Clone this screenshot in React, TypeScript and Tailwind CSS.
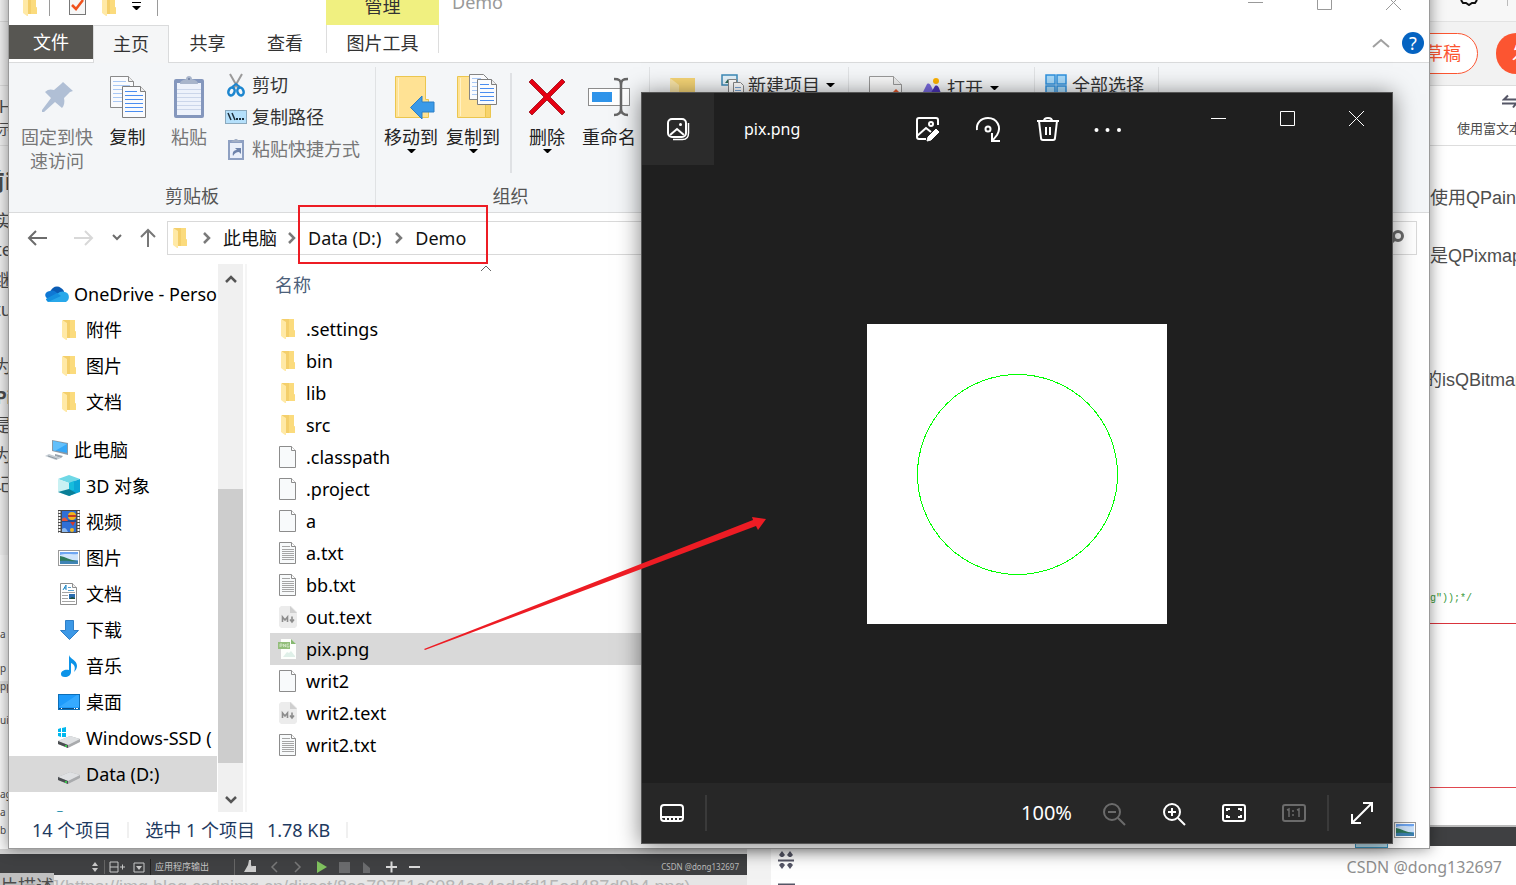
import type { ReactNode } from 'react';

const PLACES: { label: string; icon: ReactNode; level: number; gap?: boolean; active?: boolean }[] = [
  { label: 'OneDrive - Perso', icon: <CloudIcon />, level: 0 },
  { label: '附件', icon: <FolderIcon />, level: 1 },
  { label: '图片', icon: <FolderIcon />, level: 1 },
  { label: '文档', icon: <FolderIcon />, level: 1 },
  { label: '此电脑', icon: <ComputerIcon />, level: 0, gap: true },
  { label: '3D 对象', icon: <CubeIcon />, level: 1 },
  { label: '视频', icon: <VideoIcon />, level: 1 },
  { label: '图片', icon: <PictureIcon />, level: 1 },
  { label: '文档', icon: <DocumentIcon />, level: 1 },
  { label: '下载', icon: <DownloadIcon />, level: 1 },
  { label: '音乐', icon: <MusicIcon />, level: 1 },
  { label: '桌面', icon: <DesktopIcon />, level: 1 },
  { label: 'Windows-SSD (', icon: <DriveIcon system />, level: 1 },
  { label: 'Data (D:)', icon: <DriveIcon />, level: 1, active: true },
];

const FILES = [
  { name: '.settings', kind: 'folder' },
  { name: 'bin', kind: 'folder' },
  { name: 'lib', kind: 'folder' },
  { name: 'src', kind: 'folder' },
  { name: '.classpath', kind: 'file' },
  { name: '.project', kind: 'file' },
  { name: 'a', kind: 'file' },
  { name: 'a.txt', kind: 'text' },
  { name: 'bb.txt', kind: 'text' },
  { name: 'out.text', kind: 'markdown' },
  { name: 'pix.png', kind: 'png' },
  { name: 'writ2', kind: 'file' },
  { name: 'writ2.text', kind: 'markdown' },
  { name: 'writ2.txt', kind: 'text' },
];

/* ---------- icons ---------- */

function FolderIcon() {
  return (
    <svg width="16" height="22" viewBox="0 0 16 22">
      <path d="M2 1h12v11l1 1v6H3z" fill="#f4cf6b" />
      <path d="M9 1h5v11l1 1v6H9z" fill="#fbdb7d" />
      <path d="M1 1l5 3v17l-1 0-4-3z" fill="#ffe9a6" />
    </svg>
  );
}

function CloudIcon() {
  return (
    <svg width="24" height="16" viewBox="0 0 24 16">
      <path d="M5 6C7 1 12-1 16 2c2 1 3 3 3 4l-7 3z" fill="#0a5cb4" />
      <path d="M5 5c3-1 5 0 7 2l7 6H3c-4-2-4-7 2-8z" fill="#0f78d4" />
      <path d="M12 8c3-3 6-3 8-2 5 1 5 8 1 10H5c-2 0-3-1-4-3z" fill="#28a8ea" />
      <path d="M1 13l11-6 4 3-13 6c-1-1-2-2-2-3z" fill="#1490df" />
    </svg>
  );
}

function ComputerIcon() {
  return (
    <svg width="24" height="22" viewBox="0 0 24 22">
      <path d="M7 1l16 3v12L7 12z" fill="#8a99a6" />
      <path d="M8 2l14 3v9L8 11z" fill="#35a7f7" />
      <path d="M8 2l14 3-12 7-2-1z" fill="#63c0fb" />
      <path d="M10 15l8 2-2 2-6-2z" fill="#9aa4ad" />
      <path d="M4 15l12 4-5 2-11-4z" fill="#c3cbd2" />
      <path d="M3 17l9 3" stroke="#8f9aa3" strokeWidth="1" />
    </svg>
  );
}

function CubeIcon() {
  return (
    <svg width="24" height="24" viewBox="0 0 24 24">
      <path d="M1 5l11-4 11 4-11 4z" fill="#6fd8e6" />
      <path d="M1 5l11 4v13L1 18z" fill="#c9f1f3" />
      <path d="M12 9l11-4v13l-11 4z" fill="#0ba6d6" />
      <path d="M12 9l5-2v9l-5 1z" fill="#16bcdc" />
      <path d="M1 18l11-3 7 4-7 3z" fill="#0a7f97" />
    </svg>
  );
}

function VideoIcon() {
  return (
    <svg width="24" height="24" viewBox="0 0 24 24">
      <rect x="1" width="22" height="23" fill="#4a4a4a" />
      <rect x="5" y="1" width="14" height="21" fill="#2f6fd6" />
      <path d="M5 11h14" stroke="#152a55" strokeWidth="1" />
      <path d="M2.500 1v22M21.500 1v22" stroke="#fff" strokeWidth="2" strokeDasharray="2 1" />
      <circle cx="15" cy="6" r="4" fill="#f2b51d" />
      <path d="M11 5h8v2h-8z" fill="#c33a24" />
      <path d="M5 9c3-3 4-1 6 2H5z" fill="#e2573b" />
      <path d="M13 12h5l-2 4z" fill="#d33b2b" />
      <circle cx="15" cy="20" r="2" fill="#efb823" />
      <path d="M5 19c3-2 4-1 6 3H5z" fill="#8cb8ee" />
    </svg>
  );
}

function PictureIcon() {
  return (
    <svg width="24" height="18" viewBox="0 0 24 18">
      <rect x="1.500" y="1.500" width="21" height="15" fill="#fff" stroke="#9a9a9a" />
      <rect x="3" y="3" width="18" height="12" fill="#6ea6f2" />
      <path d="M3 6c6-2 11 0 18-1v6H3z" fill="#cfe4fb" />
      <path d="M3 7c6 1 9 4 18 5v1H3z" fill="#2f7a5b" />
      <path d="M3 12c7-1 12 1 18 0v3H3z" fill="#3f83b4" />
    </svg>
  );
}

function DocumentIcon() {
  return (
    <svg width="24" height="24" viewBox="0 0 24 24">
      <path d="M3.500 1.500h12l4 4v17h-16z" fill="#fff" stroke="#8e8e8e" />
      <path d="M15.500 1.500v4h4" fill="#f0f0f0" stroke="#8e8e8e" />
      <path d="M6 8l3-5v5M7 6h2" stroke="#1b84c4" fill="none" />
      <path d="M11 5.500h3M11 8.500h6" stroke="#5aa2cf" />
      <path d="M5 10.500h13M5 13.500h6M5 16.500h6M5 19.500h13" stroke="#a5a5a5" />
      <rect x="12" y="12" width="6" height="5" fill="#2a6db0" />
      <path d="M12 17l3-2 3 1v1z" fill="#1d4f3e" />
    </svg>
  );
}

function DownloadIcon() {
  return (
    <svg width="24" height="22" viewBox="0 0 24 22">
      <path d="M8.500 1.500h8v10h5L12.500 20.500l-9-9h5z" fill="#3c98e6" stroke="#2f7fc7" />
    </svg>
  );
}

function MusicIcon() {
  return (
    <svg width="24" height="24" viewBox="0 0 24 24">
      <path
        d="M12 1c1 4 8 5 8 11 0 3-2 5-3 6 2-5 0-8-3-9v9c0 3-3 5-6 5s-4-1-4-3c0-3 4-5 8-4z"
        fill="#0c93e8"
      />
    </svg>
  );
}

function DesktopIcon() {
  return (
    <svg width="24" height="18" viewBox="0 0 24 18">
      <rect x="1.500" y="1.500" width="21" height="15" fill="#1e9bfb" stroke="#0d6fb8" />
      <path d="M2 14L20 2h2v12z" fill="#36aaff" />
      <path d="M2 15.500h20" stroke="#0c4f86" />
      <path d="M4 15.500h1M17 15.500h1M19 15.500h2" stroke="#fff" />
    </svg>
  );
}

function DriveIcon({ system }: { system?: boolean }) {
  return (
    <svg width="24" height="24" viewBox="0 0 24 24">
      <path d="M1 15l12-5 10 3v3l-12 6-10-4z" fill="#a9abad" />
      <path d="M1 15l12-5 10 3-12 6z" fill="#dfe1e3" />
      <path d="M1 15l10 4v3L1 18z" fill="#4a4d50" />
      <path d="M8 20h2" stroke="#39c24a" strokeWidth="2" />
      {system && <path d="M1 3l3-1v4H1zM5 2l4-1v5H5zM1 7h3v4l-3-1zM5 7h4v4H5z" fill="#00b8ee" />}
    </svg>
  );
}

function FileIcon({ kind }: { kind: string }) {
  if (kind === 'folder') {
    return <FolderIcon />;
  }
  if (kind === 'markdown') {
    return (
      <svg width="20" height="24" viewBox="0 0 20 24">
        <path d="M3 1h10l6 6v14l-2 2H3l-2-2V3z" fill="#ececec" />
        <path d="M12 1l7 7h-7z" fill="#cfcfcf" />
        <path d="M4.500 17v-5l2.500 3 2.500-3v5M14 11.500v5M12 14.500l2 2.500 2-2.500" fill="none" stroke="#8d8d8d" strokeWidth="1.600" />
      </svg>
    );
  }
  if (kind === 'png') {
    return (
      <svg width="20" height="24" viewBox="1 0 20 24">
        <path d="M4 2h10l5 5v15H4z" fill="#fdfffc" />
        <path d="M14 2l5 5h-5z" fill="#86b870" />
        <rect x="1" y="5" width="12" height="7" fill="#93be7b" />
        <path d="M3 10V7h2v2H3M6.500 10V7l2 3V7M12 7h-2v3h2V8.500" fill="none" stroke="#dcecd3" strokeWidth="0.700" />
        <path d="M6 20l4-5 2 1 2-2 4 5v1z" fill="#dff0e8" />
      </svg>
    );
  }
  return (
    <svg width="20" height="24" viewBox="0 0 20 24">
      <path d="M1.500 1.500h12l4 4v17h-16z" fill="#f8fafb" stroke="#8c8c8c" />
      <path d="M13.500 1.500v4h4" fill="#fff" stroke="#8c8c8c" />
      {kind === 'text' && (
        <path d="M4 5.500h8M4 8.500h12M4 10.500h12M4 12.500h12M4 14.500h12M4 16.500h12M4 18.500h12" stroke="#a5a5a5" />
      )}
    </svg>
  );
}

function SheetsIcon() {
  return (
    <svg width="38" height="44" viewBox="0 0 38 44">
      <path d="M1.500 1.500h18l5 5v26h-23z" fill="#fafbfd" stroke="#8a8a8a" />
      <path d="M19.500 1.500v5h5" fill="#eee" stroke="#8a8a8a" />
      <path d="M4 6.500h13M4 10.500h17M4 14.500h10M4 18.500h9M4 22.500h9M4 26.500h9" stroke="#a9c8f5" />
      <path d="M13.500 11.500h18l5 5v26h-23z" fill="#fafbfd" stroke="#7e7e7e" />
      <path d="M31.500 11.500v5h5" fill="#eee" stroke="#7e7e7e" />
      <path d="M16 16.500h12M16 20.500h18M16 24.500h18M16 28.500h18M16 32.500h18M16 36.500h18" stroke="#4a8df0" />
    </svg>
  );
}

function PinIcon() {
  return (
    <svg width="38" height="44" viewBox="0 0 38 44">
      <path d="M25 7l10 9-3 1-6 6c1 4 0 8-2 10l-7-6L6 37l-2 0 0-2 9-12-6-6c3-3 6-3 9-2l7-6z" fill="#b0bfd5" />
    </svg>
  );
}

function ClipboardIcon() {
  return (
    <svg width="32" height="44" viewBox="0 0 32 44">
      <rect x="1" y="4" width="30" height="39" rx="2" fill="#8497bd" />
      <rect x="4" y="8" width="24" height="32" fill="#edf2fb" />
      <path d="M4 14.500h24M4 18.500h24M4 22.500h24M4 26.500h24M4 30.500h24M4 34.500h24" stroke="#cbd6ea" />
      <path d="M7 9c0-3 3-4 6-5 0-4 6-4 6 0 3 1 6 2 6 5z" fill="#a8b5cb" />
      <circle cx="16" cy="4" r="1" fill="#6b7c9e" />
    </svg>
  );
}

function ScissorsIcon() {
  return (
    <svg width="22" height="24" viewBox="0 0 22 24">
      <path d="M5 1l8 14M17 1L9 15" stroke="#9a9a9a" strokeWidth="2" />
      <ellipse cx="6.500" cy="18.500" rx="3" ry="4" fill="none" stroke="#1c86cf" strokeWidth="2.500" transform="rotate(20 6.500 18.500)" />
      <ellipse cx="15.500" cy="18.500" rx="3" ry="4" fill="none" stroke="#1c86cf" strokeWidth="2.500" transform="rotate(-20 15.500 18.500)" />
      <path d="M7 14l4-3 4 3" stroke="#1c86cf" strokeWidth="2" fill="none" />
    </svg>
  );
}

function PathIcon() {
  return (
    <svg width="22" height="14" viewBox="0 0 22 14">
      <rect x="0.500" y="0.500" width="21" height="13" fill="#b5e0fb" stroke="#8ba9bd" />
      <path d="M3 3l3 7M7 3l3 7" stroke="#1d2d3a" strokeWidth="1.500" />
      <path d="M11 9h2M14 9h2M17 9h2" stroke="#1d2d3a" strokeWidth="2" />
    </svg>
  );
}

function PasteShortcutIcon() {
  return (
    <svg width="22" height="24" viewBox="0 0 22 24">
      <rect x="3" y="3" width="16" height="20" fill="#8ea0c2" />
      <rect x="5" y="6" width="12" height="15" fill="#eaf0fa" />
      <path d="M6 5c1-2 3-1 4-3h2c1 2 3 1 4 3z" fill="#a3b0c6" />
      <path d="M8 19c-1-4 1-6 4-6l-2-2h6v6l-2-2c-3 0-4 1-6 4z" fill="#6f84ab" />
    </svg>
  );
}

function MoveToIcon() {
  return (
    <svg width="52" height="46" viewBox="-10 0 52 46">
      <path d="M0.500 2.500h30v23h3v18h-33z" fill="#ffe294" stroke="#ebc64f" />
      <path d="M3.500 4v38" stroke="#fff1c4" />
      <path d="M15.500 33.500L27 22v6h12v10H27v7z" fill="#3a9ae8" stroke="#2b7fc6" />
    </svg>
  );
}

function CopyToIcon() {
  return (
    <svg width="52" height="46" viewBox="-10 0 52 46">
      <path d="M0.500 2.500h28v41h-28z" fill="#ffe294" stroke="#ebc64f" />
      <path d="M28.500 30.500h5v13h-5z" fill="#f7d36c" stroke="#ebc64f" />
      <path d="M3.500 4v38" stroke="#fff1c4" />
      <path d="M12.500 0.500h14l5 5v20h-19z" fill="#fafbfd" stroke="#858585" />
      <path d="M15 4.500h9M15 8.500h9M15 12.500h5M15 16.500h5M15 20.500h5" stroke="#a9c8f5" />
      <path d="M20.500 5.500h14l5 5v20h-19z" fill="#fafbfd" stroke="#7e7e7e" />
      <path d="M34.500 5.500v5h5" fill="#eee" stroke="#7e7e7e" />
      <path d="M23 10.500h9M23 14.500h14M23 18.500h14M23 22.500h14M23 26.500h14" stroke="#4a8df0" />
    </svg>
  );
}

function DeleteIcon() {
  return (
    <svg width="40" height="46" viewBox="0 0 40 46">
      <path d="M2 8l3-3 15 15L35 5l3 3-15 15 15 15-3 3-15-15L5 41l-3-3 15-15z" fill="#e60012" stroke="#a8202a" />
    </svg>
  );
}

function RenameIcon() {
  return (
    <svg width="44" height="46" viewBox="0 0 44 46">
      <rect x="1.500" y="14.500" width="41" height="17" fill="#fff" stroke="#8c8c8c" />
      <rect x="5" y="18" width="20" height="10" fill="#2f94ea" />
      <path d="M27 5c5 0 7 1 7 6v24c0 4-2 6-7 6M41 5c-5 0-7 1-7 6M41 41c-5 0-7-2-7-6" fill="none" stroke="#666" strokeWidth="2.500" />
    </svg>
  );
}

function Caret() {
  return (
    <svg width="9" height="5" viewBox="0 0 9 5">
      <path d="M0 0h9L5 4H4z" fill="#000" />
    </svg>
  );
}

function Crumb() {
  return (
    <svg width="10" height="12" viewBox="0 0 10 12">
      <path d="M2 1l5 5-5 5" fill="none" stroke="#7a7a7a" strokeWidth="2.500" />
    </svg>
  );
}

/* ---------- editor page behind the windows ---------- */

function EditorLeft() {
  const row = 'flex shrink-0 items-center justify-end whitespace-nowrap';
  return (
    <div className="flex w-3 flex-col overflow-hidden bg-[#f2f2f2] text-lg leading-none text-[#4d4d4d]">
      <div className={`${row} h-[22px] border-b border-[#ddd] bg-[#f7f7f7]`} />
      <div className={`${row} h-16 border-b border-[#ddd]`} />
      <div className={`${row} h-[34px] pt-1.5`}>H</div>
      <div className={`${row} h-[26px] border-b border-[#ddd] pb-2 text-sm`}>示</div>
      <div className={`${row} h-[70px] text-2xl font-bold`}>前i</div>
      <div className={`${row} h-[10px]`}>实</div>
      <div className={`${row} h-[46px]`}>nte</div>
      <div className={`${row} h-4`}>继</div>
      <div className={`${row} h-[42px]`}>ctu</div>
      <div className={`${row} h-[60px] pt-3`}>为</div>
      <div className={`${row} h-[14px] font-bold`}>Pi</div>
      <div className={`${row} h-[42px]`}>是</div>
      <div className={`${row} h-[18px]`}>为</div>
      <div className={`${row} h-10`}>记</div>
      <div className={`${row} h-[51px]`} />
      <div className="flex flex-1 flex-col justify-end gap-2 bg-[#fafafa] pb-[14px] text-[10px]">
        <span>a</span>
        <span className="pt-4">p</span>
        <span className="bg-[#e4e4e4]">pp</span>
        <span className="pt-4">ui</span>
        <span className="pt-14">ag</span>
        <span>a</span>
        <span>b</span>
      </div>
    </div>
  );
}

function EditorRight() {
  return (
    <div className="flex w-[92px] flex-col overflow-hidden whitespace-nowrap font-['Liberation_Sans','Noto_Sans_CJK_SC',sans-serif] text-lg text-[#4d4d4d]">
      <div className="flex h-[22px] items-start justify-end gap-7 border-b border-[#e2e2e2] bg-[#f7f7f7] pr-2">
        <svg width="20" height="6" viewBox="0 0 20 6">
          <path d="M2 0l2 3h3l3 2 3-2h3l2-3" fill="none" stroke="#111" strokeWidth="2" />
        </svg>
        <span className="h-[6px] w-px bg-[#bbb]" />
      </div>
      <div className="flex h-16 items-center justify-end gap-[18px] border-b border-[#ddd] bg-[#f2f2f2]">
        <button className="flex h-[41px] w-32 shrink-0 items-center justify-end rounded-full border border-[#fc5531] bg-white pr-4 text-[#fc5531]">
          草稿
        </button>
        <button className="h-[41px] w-5 shrink-0 overflow-hidden rounded-l-full bg-[#fc5531] pl-4 text-left text-white">发</button>
      </div>
      <div className="flex h-[60px] flex-col items-end gap-2.5 border-b border-[#ddd] pt-2 text-sm">
        <svg width="14" height="16" viewBox="0 0 14 16">
          <path d="M14 5.500H2l4-4M0 9.500h14M14 9.500l-3 4" fill="none" stroke="#555666" strokeWidth="2" />
        </svg>
        <span className="w-[59px] text-[13px]">使用富文本</span>
      </div>
      <p className="h-[58px] pl-1.5 pt-[38px]">使用QPainter</p>
      <p className="h-[58px] pl-1.5 pt-[38px] leading-7">是QPixmap</p>
      <p className="h-[118px] pt-[104px] leading-7">的isQBitmap</p>
      <p className="flex h-[244px] shrink-0 items-end border-b border-[#d9343c] pb-4 font-['Liberation_Mono',monospace] text-[10px] leading-4 text-[#3a9a3a]">
        pg"));*/
      </p>
      <div className="h-[164px] shrink-0 border-b border-[#e0484f]" />
      <div className="mt-auto mb-[3px] h-[21px] shrink-0 border-t-2 border-[#bbb] bg-[#3f4042]" />
    </div>
  );
}

function EditorFooter() {
  return (
    <div className="flex h-9 shrink-0 overflow-hidden whitespace-nowrap">
      <div className="flex w-[747px] shrink-0 flex-col bg-[#d4d4d4] pt-[5px]">
        <div className="flex h-[21px] shrink-0 items-end bg-[#3f4042] pr-2 text-[9px] leading-4 text-[#c4c4c4]">
          <svg className="ml-[91px]" width="60" height="16" viewBox="0 -1 60 16">
            <path d="M1 6l3-4 3 4zM1 8l3 4 3-4z" fill="#c8c8c8" />
            <path d="M13.500 0v14" stroke="#666" />
            <path d="M19 2h8v10h-8zM19 7h8M29 7h5M31.500 4.500v5" fill="none" stroke="#c8c8c8" />
            <path d="M43 3h10v9H43z" fill="none" stroke="#c8c8c8" />
            <path d="M45 6h6l-3 4z" fill="#c8c8c8" />
            <path d="M59.500-1v16" stroke="#222" />
          </svg>
          <span className="ml-1">应用程序输出</span>
          <svg className="ml-6" width="190" height="16" viewBox="0 0 190 16">
            <path d="M1.500 0v16" stroke="#666" />
            <path d="M16 1h2v5l4 7H11l4-7zM19 7h4v6h-3" fill="#ccc" />
            <path d="M44 3l-5 5 5 5M62 3l5 5-5 5" fill="none" stroke="#777" strokeWidth="1.500" />
            <path d="M84 2l10 6-10 6z" fill="#7fc15e" />
            <path d="M106 3h11v11h-11zM130 3l7 6v5h-7z" fill="#6a6b6d" />
            <path d="M153 8h11M158.500 2.500v11M176 8h11" stroke="#d8d8d8" strokeWidth="2" />
          </svg>
          <span className="ml-auto text-[8px] text-[#bdbdbd]">CSDN @dong132697</span>
        </div>
        <div className="flex h-6 items-center bg-[#e6e6e6] font-['Liberation_Sans','Noto_Sans_CJK_SC',sans-serif] text-lg text-[#b5b5b5]">
          <span className="bg-[#c0c0c0] text-[#4d4d4d]">片描述</span>
          <span>](https://img.blog.csdnimg.cn/direct/8ca79751c6084aa4adcfd15ed487d9b4.png)</span>
        </div>
      </div>
      <div className="w-6 shrink-0 bg-[#f3f3f3]" />
      <svg className="ml-1.5" width="18" height="36" viewBox="0 0 18 36">
        <path d="M1 11.500h16M1 35.500h17" stroke="#555666" strokeWidth="2" />
        <path d="M5 2l3 4-2 2H4L2 6zM13 2l3 4-2 2h-2l-2-2zM5 20l3-4-2-2H4l-2 2zM13 20l3-4-2-2h-2l-2 2z" fill="#555666" />
      </svg>
      <span className="ml-auto pr-[14px] pt-1 text-base leading-7 text-[#8f8f8f]">CSDN @dong132697</span>
    </div>
  );
}

/* ---------- explorer ---------- */

function TitleBar() {
  return (
    <div className="flex h-[46px] items-center">
      <div className="flex items-center pl-[13px] pt-2">
        <FolderIcon />
        <span className="ml-[11px] h-5 w-px bg-[#9a9a9a]" />
        <label className="ml-[19px] flex">
          <svg width="18" height="20" viewBox="0 0 18 20">
            <rect x="0.500" y="0.500" width="16" height="18" fill="#f7f7f7" stroke="#777" />
            <path d="M3 9l4 4 7-9" fill="none" stroke="#f0521d" strokeWidth="2.500" />
          </svg>
        </label>
        <span className="ml-[14px] flex">
          <FolderIcon />
        </span>
        <svg className="ml-[14px]" width="11" height="10" viewBox="0 0 11 10">
          <path d="M1 1.500h9" stroke="#000" />
          <path d="M1 5h9L6 9H5z" fill="#000" />
        </svg>
        <span className="ml-[15px] h-5 w-px bg-[#9a9a9a]" />
      </div>
      <div className="ml-[168px] flex h-full w-[113px] items-center justify-center bg-[#f0f080] pt-2 text-[#333]">管理</div>
      <span className="ml-[13px] text-[#999]">Demo</span>
      <div className="ml-auto flex text-[#999]">
        <WindowControls />
      </div>
    </div>
  );
}

function WindowControls() {
  return (
    <div className="flex pr-px">
      <button aria-label="最小化" className="flex h-[50px] w-[69px] items-center justify-center">
        <svg width="15" height="15" viewBox="0 0 15 15">
          <path d="M0 7.500h15" stroke="currentColor" />
        </svg>
      </button>
      <button aria-label="最大化" className="flex h-[50px] w-[69px] items-center justify-center">
        <svg width="15" height="15" viewBox="0 0 15 15">
          <path d="M0.500 0.500h14v14H0.500z" fill="none" stroke="currentColor" />
        </svg>
      </button>
      <button aria-label="关闭" className="flex h-[50px] w-[69px] items-center justify-center">
        <svg width="15" height="15" viewBox="0 0 15 15">
          <path d="M0 0l15 15M15 0L0 15" stroke="currentColor" />
        </svg>
      </button>
    </div>
  );
}

function RibbonTabs() {
  return (
    <div className="flex h-[38px] border-b border-[#dadbdc] text-[#333]">
      <button className="h-[34px] w-[84px] bg-[#575652] text-white">文件</button>
      <button className="-mb-px w-[76px] border border-b-0 border-[#dadbdc] bg-[#f5f6f7] pb-0.5">主页</button>
      <button className="w-[77px] pb-0.5">共享</button>
      <button className="w-[78px] pb-0.5">查看</button>
      <button className="ml-[2px] h-7 w-[113px] border-x border-[#ddd] pt-2 leading-5">图片工具</button>
      <div className="ml-auto flex items-center gap-3 pr-[5px] pb-0.5">
        <svg width="18" height="12" viewBox="0 0 18 12">
          <path d="M1 10l8-7 8 7" fill="none" stroke="#a0a0a0" strokeWidth="2" />
        </svg>
        <button aria-label="帮助" className="h-[22px] w-[22px] rounded-full bg-[#0563c1] text-center text-lg leading-[22px] text-white">
          ?
        </button>
      </div>
    </div>
  );
}

function BigButton({ icon, label, width, caret, dim }: { icon: ReactNode; label: ReactNode; width: string; caret?: boolean; dim?: boolean }) {
  return (
    <button className={`flex ${width} shrink-0 flex-col items-center ${dim ? 'text-[#777]' : 'text-[#222]'}`}>
      <span className="flex h-14 items-center">{icon}</span>
      <span className="leading-6 whitespace-nowrap">{label}</span>
      {caret && <Caret />}
    </button>
  );
}

function Ribbon() {
  return (
    <div className="flex h-[150px] border-b border-[#dadbdc] bg-[#f4f6f8] py-1 text-[#333]">
      <section className="flex w-[367px] shrink-0 flex-col justify-between border-r border-[#e0e2e4]">
        <div className="flex pl-2 pt-0.5">
          <BigButton width="w-20" dim icon={<PinIcon />} label={<>固定到快<br />速访问</>} />
          <BigButton width="w-[61px]" icon={<SheetsIcon />} label="复制" />
          <BigButton width="w-[62px]" dim icon={<ClipboardIcon />} label="粘贴" />
          <div className="ml-[5px] flex flex-col whitespace-nowrap">
            <button className="flex h-8 items-center gap-[5px]"><ScissorsIcon />剪切</button>
            <button className="flex h-8 items-center gap-[5px]"><PathIcon />复制路径</button>
            <button className="flex h-8 items-center gap-[5px] text-[#777]"><PasteShortcutIcon />粘贴快捷方式</button>
          </div>
        </div>
        <span className="text-center leading-6 text-[#555]">剪贴板</span>
      </section>
      <section className="flex w-[274px] shrink-0 flex-col justify-between border-r border-[#e0e2e4]">
        <div className="flex pl-1 pt-0.5">
          <BigButton width="w-[62px]" caret icon={<MoveToIcon />} label="移动到" />
          <BigButton width="w-[62px]" caret icon={<CopyToIcon />} label="复制到" />
          <span className="mt-1 ml-1.5 h-[100px] w-0.5 bg-[#dfe1e4]" />
          <BigButton width="w-[70px]" caret icon={<DeleteIcon />} label="删除" />
          <BigButton width="w-[54px]" icon={<RenameIcon />} label="重命名" />
        </div>
        <span className="pr-1 text-center leading-6 text-[#555]">组织</span>
      </section>
      <section className="flex w-[199px] shrink-0 items-start border-r border-[#e0e2e4] pl-5 pt-0.5">
        <svg className="mt-2" width="26" height="40" viewBox="0 0 26 40">
          <path d="M0 1h25v38H0z" fill="#f6d576" />
          <path d="M0 1l9 7v32H0z" fill="#fbe6a8" />
        </svg>
        <button className="ml-[25px] flex h-8 items-center gap-[3px]">
          <svg width="24" height="24" viewBox="0 0 24 24">
            <rect x="1" y="2" width="15" height="10" fill="#e5f3fb" stroke="#3c8bb8" strokeWidth="1.500" />
            <path d="M4 10l3-4 3 4z" fill="#2c6b5a" />
            <path d="M7.500 6.500h8v14h-8z" fill="#fff" stroke="#888" />
            <path d="M12.500 9.500h7l3 3v10h-10z" fill="#fff" stroke="#888" />
            <path d="M14 14.500h6M14 17.500h6M14 20.500h6" stroke="#7aa7d8" />
          </svg>
          新建项目
          <span className="ml-[3px] flex"><Caret /></span>
        </button>
      </section>
      <section className="flex w-[186px] shrink-0 items-start border-r border-[#e0e2e4] pl-5 pt-[5px]">
        <svg className="mt-1" width="34" height="44" viewBox="0 0 34 44">
          <path d="M0.500 0.500h24l8 8v34h-32z" fill="#f9f9f9" stroke="#999" />
          <path d="M24.500 0.500v8h8" fill="#eee" stroke="#999" />
          <path d="M24 16l3-3 3 3z" fill="#e2572b" />
        </svg>
        <button className="ml-4 flex h-8 items-center gap-1">
          <svg width="24" height="24" viewBox="0 0 24 24">
            <circle cx="17" cy="5" r="3" fill="#ffb300" />
            <path d="M2 20L8 8c2-1 3 0 4 2l5 10z" fill="#7a6be0" />
            <path d="M10 20l6-10c2-1 3 0 4 2l3 8z" fill="#4b34b8" />
          </svg>
          打开
          <span className="ml-[3px] flex"><Caret /></span>
        </button>
      </section>
      <section className="flex w-[124px] shrink-0 items-start border-r border-[#e0e2e4] pl-2.5 pt-0.5">
        <button className="flex h-8 items-center gap-[5px] whitespace-nowrap">
          <svg width="22" height="24" viewBox="0 0 22 24">
            <path d="M1 2h9v9H1zM12 2h9v9h-9zM1 13h9v9H1zM12 13h9v9h-9z" fill="#a9dbfb" stroke="#2f93e0" strokeWidth="1.500" />
          </svg>
          全部选择
        </button>
      </section>
    </div>
  );
}

function AddressBar() {
  return (
    <div className="flex h-[51px] items-center pr-3 pb-0.5 pl-[18px] text-[#111]">
      <button aria-label="后退">
        <svg width="22" height="18" viewBox="0 0 22 18">
          <path d="M20 9H2M9 2L2 9l7 7" fill="none" stroke="#6c6c6c" strokeWidth="2" />
        </svg>
      </button>
      <button aria-label="前进" className="ml-6">
        <svg width="22" height="18" viewBox="0 0 22 18">
          <path d="M1 9h18M12 2l7 7-7 7" fill="none" stroke="#d8d8d8" strokeWidth="2" />
        </svg>
      </button>
      <button aria-label="最近浏览的位置" className="ml-4">
        <svg width="12" height="8" viewBox="0 0 12 8">
          <path d="M2 1l4 4 4-4" fill="none" stroke="#6c6c6c" strokeWidth="2" />
        </svg>
      </button>
      <button aria-label="向上" className="ml-4">
        <svg width="18" height="22" viewBox="0 0 18 22">
          <path d="M9 20V3M2 10l7-7 7 7" fill="none" stroke="#777" strokeWidth="2" />
        </svg>
      </button>
      <nav className="ml-2.5 flex h-[34px] flex-1 items-center border border-[#d9d9d9] pl-1 whitespace-nowrap">
        <FolderIcon />
        <span className="ml-[14px]"><Crumb /></span>
        <button className="ml-[11px]">此电脑</button>
        <span className="ml-2.5"><Crumb /></span>
        <button className="ml-[11px]">Data (D:)</button>
        <span className="ml-[13px]"><Crumb /></span>
        <button className="ml-[11px]">Demo</button>
      </nav>
      <div className="ml-3 flex h-[34px] w-64 items-center border border-[#d9d9d9] pr-3">
        <input aria-label="搜索" className="h-full min-w-0 flex-1 outline-none" />
        <svg width="16" height="18" viewBox="0 0 16 18">
          <circle cx="10" cy="7" r="4.500" fill="none" stroke="#6c6c6c" strokeWidth="3" />
          <path d="M7 10l-6 6" stroke="#6c6c6c" strokeWidth="3" />
        </svg>
      </div>
    </div>
  );
}

function Sidebar() {
  return (
    <aside className="w-[208px] shrink-0 overflow-hidden pt-3 text-black">
      {PLACES.map((place, i) => (
        <a
          key={i}
          href="#"
          className={`flex h-9 items-center gap-[5px] whitespace-nowrap ${place.gap ? 'mt-3' : ''} ${place.active ? 'bg-[#d9d9d9]' : ''} ${
            place.level === 0 ? 'pl-9' : 'pl-12'
          }`}
        >
          <span className="flex w-6 shrink-0 justify-center">{place.icon}</span>
          {place.label}
        </a>
      ))}
      <svg className="mt-[18px] ml-[46px]" width="12" height="3" viewBox="0 0 12 3">
        <path d="M0 3l3-2h4l3 2z" fill="#2f93b0" />
      </svg>
    </aside>
  );
}

function ScrollBar() {
  return (
    <div className="ml-px flex w-[25px] shrink-0 flex-col items-center bg-[#f0f0f0]">
      <svg className="my-2 shrink-0" width="14" height="14" viewBox="0 0 14 14">
        <path d="M2 10l5-5 5 5" fill="none" stroke="#555" strokeWidth="2.500" />
      </svg>
      <div className="flex-[195]" />
      <div className="w-full flex-[273] bg-[#cdcdcd]" />
      <div className="flex-[23]" />
      <svg className="my-1.5 shrink-0" width="14" height="14" viewBox="0 0 14 14">
        <path d="M2 5l5 5 5-5" fill="none" stroke="#555" strokeWidth="2.500" />
      </svg>
    </div>
  );
}

function FileList() {
  return (
    <div className="ml-0.5 flex-1 border-l-2 border-[#f5f5f5] pr-12 pl-[23px]">
      <table className="w-full border-collapse text-left text-black">
        <thead>
          <tr className="h-[49px]">
            <th className="relative pb-2 pl-[5px] font-normal text-[#4c607a]">
              名称
              <svg className="absolute top-0 left-[210px]" width="14" height="8" viewBox="0 0 14 8">
                <path d="M1 7l5-5 5 5" fill="none" stroke="#666" />
              </svg>
            </th>
          </tr>
        </thead>
        <tbody>
          {FILES.map((file) => (
            <tr key={file.name} className={`h-8 ${file.name === 'pix.png' ? 'bg-[#d9d9d9]' : ''}`}>
              <td className="p-0">
                <span className="flex items-center gap-2 pl-[7px] leading-8">
                  <span className="flex w-[21px] justify-center">
                    <FileIcon kind={file.kind} />
                  </span>
                  {file.name}
                </span>
              </td>
            </tr>
          ))}
        </tbody>
      </table>
    </div>
  );
}

function StatusBar() {
  return (
    <div className="flex h-9 shrink-0 items-center pr-3 pl-[23px] text-[#1e3a5f]">
      <span>14 个项目</span>
      <span className="mx-4 h-4 w-0.5 bg-[#f0f0f0]" />
      <span>选中 1 个项目</span>
      <span className="ml-3">1.78 KB</span>
      <span className="ml-4 h-4 w-0.5 bg-[#f0f0f0]" />
      <span className="mr-[5px] ml-auto h-7 w-[33px] self-end border border-[#3a94bf] bg-[#b5d9e8]" />
      <PictureIcon />
    </div>
  );
}

function Explorer() {
  return (
    <div className="absolute -top-[22px] right-[86px] bottom-9 left-2 flex flex-col overflow-hidden border border-[#9a9a9a] bg-white shadow-[0_0_14px_rgba(0,0,0,0.45)]">
      <TitleBar />
      <RibbonTabs />
      <Ribbon />
      <AddressBar />
      <div className="flex min-h-0 flex-1">
        <Sidebar />
        <ScrollBar />
        <FileList />
      </div>
      <StatusBar />
    </div>
  );
}

/* ---------- photo viewer ---------- */

function Tool({ label, dim, children }: { label: string; dim?: boolean; children: ReactNode }) {
  return (
    <button aria-label={label} className={`flex w-[60px] items-center justify-center ${dim ? 'text-[#6b6b6b]' : 'text-white'}`}>
      <svg width="28" height="28" viewBox="0 0 28 28" fill="none" stroke="currentColor" strokeWidth="2">
        {children}
      </svg>
    </button>
  );
}

function PhotoViewer() {
  return (
    <div className="absolute top-[92px] right-[123px] bottom-[41px] left-[641px] flex flex-col border border-[#555] bg-[#1f1f1f] text-white shadow-[0_2px_22px_rgba(0,0,0,0.5)]">
      <div className="flex h-[72px] shrink-0">
        <button aria-label="查看所有照片" className="flex w-[72px] items-center justify-center bg-[#2b2b2b]">
          <svg width="24" height="24" viewBox="0 0 24 24" fill="none" stroke="#fff" strokeWidth="2">
            <rect x="2" y="2" width="18" height="18" rx="4" />
            <path d="M4 18l7-6 7 6" />
            <circle cx="14.500" cy="7.500" r="1.500" fill="#fff" stroke="none" />
            <path d="M22.500 6v10c0 4-2 6.500-6 6.500H7" strokeWidth="1.500" />
          </svg>
        </button>
        <span className="ml-[30px] self-center text-base">pix.png</span>
        <div className="ml-auto flex">
          <Tool label="编辑">
            <path d="M12 24H5c-2 0-2-1-2-2V5c0-1 0-2 2-2h17c1 0 2 1 2 2v5M3 21l9-8 5 4" />
            <circle cx="17" cy="9" r="2" />
            <path d="M14 22l8-8 3 3-8 8-4 1z" fill="currentColor" strokeWidth="1" />
          </Tool>
          <Tool label="旋转">
            <path d="M3 15C2 8 7 3 14 3c9 0 14 9 9 17l-4 5M18 18v8h8" />
            <circle cx="14" cy="14" r="2.500" />
          </Tool>
          <Tool label="删除">
            <path d="M3 6h22M10 6c0-4 8-4 8 0M5 6l2 17c0 1 1 2 2 2h10c1 0 2-1 2-2l2-17M12 12v8M16 12v8" />
          </Tool>
          <Tool label="更多">
            <circle cx="2.500" cy="15" r="2" fill="currentColor" stroke="none" />
            <circle cx="13.500" cy="15" r="2" fill="currentColor" stroke="none" />
            <circle cx="25" cy="15" r="2" fill="currentColor" stroke="none" />
          </Tool>
        </div>
        <div className="ml-[46px] flex items-start">
          <WindowControls />
        </div>
      </div>
      <div className="flex min-h-0 flex-1 items-center justify-center">
        <svg width="300" height="300" viewBox="0 0 300 300" className="bg-white">
          <circle cx="150.500" cy="150.500" r="100" fill="none" stroke="#00ff00" shapeRendering="crispEdges" />
        </svg>
      </div>
      <div className="flex h-[60px] shrink-0 items-center bg-[#272727]">
        <Tool label="缩略图">
          <rect x="3" y="6" width="22" height="16" rx="3" />
          <path d="M3 18h22M8 18v4M12 18v4M16 18v4M20 18v4" />
        </Tool>
        <span className="ml-[3px] h-9 w-0.5 bg-[#3a3a3a]" />
        <span className="mr-3 ml-auto text-xl">100%</span>
        <Tool label="缩小" dim>
          <circle cx="12" cy="13" r="8" />
          <path d="M18 19l7 7M8 13h8" />
        </Tool>
        <Tool label="放大">
          <circle cx="12" cy="13" r="8" />
          <path d="M18 19l7 7M8 13h8M12 9v8" />
        </Tool>
        <Tool label="适应窗口">
          <rect x="3" y="6" width="22" height="16" rx="2" />
          <path d="M7 12v-2h3M18 10h3v2M7 16v2h3M18 18h3v-2" />
        </Tool>
        <Tool label="实际大小" dim>
          <rect x="3" y="6" width="22" height="16" rx="2" />
          <path d="M7 11l2-1v8M17 11l2-1v8M13 11v2M13 15v2" strokeWidth="1.500" />
        </Tool>
        <span className="mx-[3px] h-9 w-0.5 bg-[#3a3a3a]" />
        <Tool label="全屏">
          <path d="M4 24L24 4M15 4h9v9M4 15v9h9" />
        </Tool>
      </div>
    </div>
  );
}

export default function App() {
  return (
    <div className="relative flex h-screen flex-col overflow-hidden bg-white font-['Noto_Sans','Noto_Sans_CJK_SC',sans-serif] text-lg">
      <div className="flex min-h-0 flex-1 justify-between">
        <EditorLeft />
        <EditorRight />
      </div>
      <EditorFooter />
      <Explorer />
      <PhotoViewer />

      {/* red marks drawn over the desktop */}
      <div className="pointer-events-none absolute top-[205px] left-[298px] h-[59px] w-[190px] border-2 border-[#ed1c24]" />
      <svg className="pointer-events-none absolute top-[516px] left-[424px]" width="344" height="134" viewBox="0 0 344 134">
        <path d="M0 133L329 4l-1-3 14 2-8 11-2-4L1 134z" fill="#ed1c24" />
      </svg>
    </div>
  );
}
